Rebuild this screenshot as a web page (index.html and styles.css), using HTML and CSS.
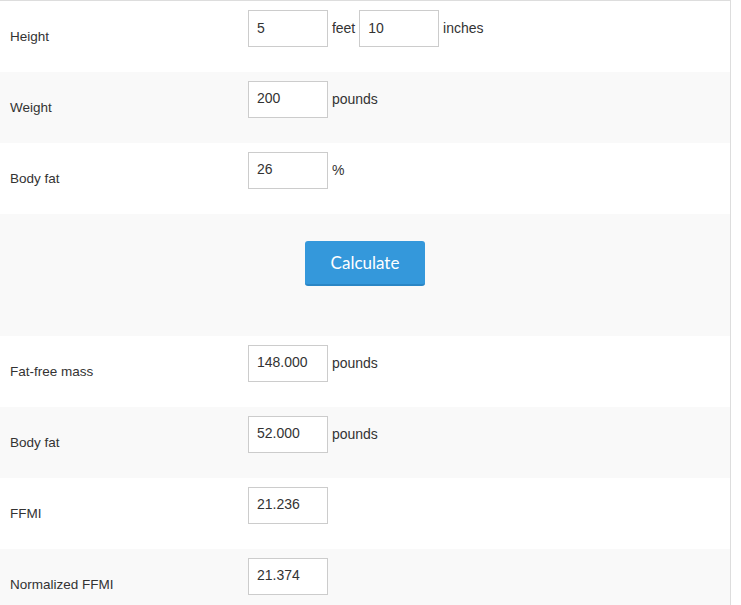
FILE: index.html
```html
<!DOCTYPE html>
<html lang="en">
<head>
    <meta charset="UTF-8">
    <meta name="viewport" content="width=device-width, initial-scale=1.0">
    <title>FFMI Calculator</title>
    <link rel="stylesheet" href="styles.css">
</head>
<body>
    <form id="ffmiForm">
        <table class="calc-table">
            <tr>
                <td class="label-cell">Height</td>
                <td class="field-cell">
                    <input type="text" class="num" value="5"> feet
                    <input type="text" class="num" value="10"> inches
                </td>
            </tr>
            <tr>
                <td class="label-cell">Weight</td>
                <td class="field-cell"><input type="text" class="num" value="200"> pounds</td>
            </tr>
            <tr>
                <td class="label-cell">Body fat</td>
                <td class="field-cell"><input type="text" class="num" value="26"> %</td>
            </tr>
            <tr class="button-row">
                <td colspan="2"><button type="submit">Calculate</button></td>
            </tr>
            <tr>
                <td class="label-cell">Fat-free mass</td>
                <td class="field-cell"><input type="text" class="num" value="148.000" readonly> pounds</td>
            </tr>
            <tr>
                <td class="label-cell">Body fat</td>
                <td class="field-cell"><input type="text" class="num" value="52.000" readonly> pounds</td>
            </tr>
            <tr>
                <td class="label-cell">FFMI</td>
                <td class="field-cell"><input type="text" class="num" value="21.236" readonly></td>
            </tr>
            <tr>
                <td class="label-cell">Normalized FFMI</td>
                <td class="field-cell"><input type="text" class="num" value="21.374" readonly></td>
            </tr>
        </table>
    </form>
</body>
</html>
```

FILE: styles.css
```css
body {
    margin: 0;
    font-family: "Liberation Sans", Arial, sans-serif;
    font-size: 13.5px;
    color: #333;
    background: #fff;
}
.calc-table {
    width: 731px;
    border-collapse: collapse;
    border-top: 1px solid #ddd;
    border-right: 1px solid #ddd;
}
.calc-table tr {
    height: 71px;
}
.calc-table tr:nth-child(even) {
    background-color: #f9f9f9;
}
.calc-table td {
    padding: 9px 8px;
}
.label-cell {
    width: 222px;
    padding-left: 10px !important;
    vertical-align: middle;
}
.field-cell {
    vertical-align: top;
    font-size: 14px;
}
.num {
    width: 80px;
    height: 37px;
    box-sizing: border-box;
    padding: 5px 8px 7px;
    border: 1px solid #ccc;
    font-family: "Liberation Sans", Arial, sans-serif;
    font-size: 14px;
    color: #333;
    background: #fff;
    vertical-align: baseline;
}
.button-row {
    height: 122px !important;
}
.button-row td {
    text-align: center;
    vertical-align: top;
    padding-top: 27px;
}
button {
    width: 120px;
    height: 45px;
    background-color: #3498db;
    color: white;
    border: none;
    border-bottom: 2px solid #2a86c5;
    border-radius: 3px;
    font-family: Lato, "Open Sans", sans-serif;
    font-size: 17px;
    cursor: pointer;
}
button:hover {
    background-color: #2a86c5;
}
```
